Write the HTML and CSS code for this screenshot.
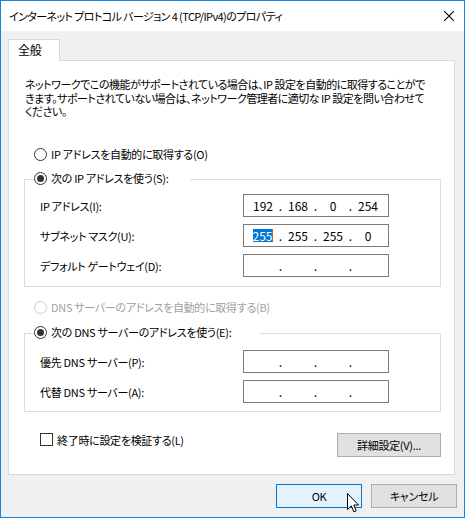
FILE: index.html
```html
<!DOCTYPE html>
<html lang="ja">
<head>
  <meta charset="UTF-8" />
  <title>インターネット プロトコル バージョン 4 (TCP/IPv4)のプロパティ</title>
  <link rel="stylesheet" href="styles.css">
</head>
<body>
  <div class="window">
    <div class="titlebar">
      <span class="title">インターネット プロトコル バージョン 4 (TCP/IPv4)のプロパティ</span>
      <svg class="close" width="10" height="10" viewBox="0 0 10 10">
        <path d="M0 0 L10 10 M10 0 L0 10" stroke="#000" stroke-width="1.1" fill="none"/>
      </svg>
    </div>

    <div class="dialog">
      <div class="tabs">
        <div class="tab">全般</div>
      </div>

      <div class="panel">
        <p class="intro">ネットワークでこの機能がサポートされている場合は、IP 設定を自動的に取得することがで<br>きます。サポートされていない場合は、ネットワーク管理者に適切な IP 設定を問い合わせて<br>ください。</p>

        <label class="radio radio-ip-auto"><span class="radio-dot"></span>IP アドレスを自動的に取得する(O)</label>

        <div class="group group-ip">
          <label class="radio checked group-head head-ip"><span class="radio-dot"></span>次の IP アドレスを使う(S):</label>
          <div class="fields">
            <div class="field">
              <span class="field-label">IP アドレス(I):</span>
              <div class="ipbox">
                <span class="seg">192</span><span class="dot">.</span><span class="seg">168</span><span class="dot">.</span><span class="seg">0</span><span class="dot">.</span><span class="seg">254</span>
              </div>
            </div>
            <div class="field">
              <span class="field-label">サブネット マスク(U):</span>
              <div class="ipbox">
                <span class="seg"><span class="sel">255</span><span class="caret"></span></span><span class="dot">.</span><span class="seg">255</span><span class="dot">.</span><span class="seg">255</span><span class="dot">.</span><span class="seg">0</span>
              </div>
            </div>
            <div class="field">
              <span class="field-label">デフォルト ゲートウェイ(D):</span>
              <div class="ipbox">
                <span class="seg"></span><span class="dot">.</span><span class="seg"></span><span class="dot">.</span><span class="seg"></span><span class="dot">.</span><span class="seg"></span>
              </div>
            </div>
          </div>
        </div>

        <label class="radio disabled radio-dns-auto"><span class="radio-dot"></span>DNS サーバーのアドレスを自動的に取得する(B)</label>

        <div class="group group-dns">
          <label class="radio checked group-head head-dns"><span class="radio-dot"></span>次の DNS サーバーのアドレスを使う(E):</label>
          <div class="fields">
            <div class="field">
              <span class="field-label">優先 DNS サーバー(P):</span>
              <div class="ipbox">
                <span class="seg"></span><span class="dot">.</span><span class="seg"></span><span class="dot">.</span><span class="seg"></span><span class="dot">.</span><span class="seg"></span>
              </div>
            </div>
            <div class="field">
              <span class="field-label">代替 DNS サーバー(A):</span>
              <div class="ipbox">
                <span class="seg"></span><span class="dot">.</span><span class="seg"></span><span class="dot">.</span><span class="seg"></span><span class="dot">.</span><span class="seg"></span>
              </div>
            </div>
          </div>
        </div>

        <div class="panel-footer">
          <label class="check"><span class="check-box"></span>終了時に設定を検証する(L)</label>
          <button class="btn btn-advanced">詳細設定(V)...</button>
        </div>
      </div>

      <div class="actions">
        <button class="btn btn-default">OK</button>
        <button class="btn">キャンセル</button>
      </div>
    </div>

    <!-- mouse pointer over the OK button -->
    <svg class="cursor" width="12" height="20" viewBox="0 0 12 20">
      <path d="M0.5 0.5 L0.5 16.5 L4.3 12.8 L6.8 18.8 L9.2 17.8 L6.8 12 L11.5 12 Z" fill="#fff" stroke="#000" stroke-width="1" stroke-linejoin="miter"/>
    </svg>
  </div>
</body>
</html>
```

FILE: styles.css
```css
* {
  box-sizing: border-box;
}
html, body {
  margin: 0;
  padding: 0;
}
body {
  font-family: "Noto Sans CJK JP", "Noto Sans", sans-serif;
  font-size: 11px;
  letter-spacing: -0.3px;
  color: #000;
  font-feature-settings: "palt";
  background: #fff;
}
.window {
  position: relative;
  width: 465px;
  height: 518px;
  border: 1px solid #1883d7;
  background: #f0f0f0;
  overflow: hidden;
}
.titlebar {
  height: 30px;
  background: #fff;
  display: flex;
  align-items: center;
  justify-content: space-between;
  padding: 0 10px 0 8px;
}
.title {
  white-space: nowrap;
  letter-spacing: -0.6px;
}
.dialog {
  padding: 8px 7px 0 7px;
}
.tabs {
  display: flex;
}
.tab {
  position: relative;
  z-index: 1;
  width: 52px;
  height: 22px;
  margin-bottom: -1px;
  padding-left: 9px;
  line-height: 20px;
  font-size: 12px;
  background: #fff;
  border: 1px solid #d9d9d9;
  border-bottom: none;
}
.panel {
  width: 447px;
  height: 415px;
  background: #fff;
  border: 1px solid #d9d9d9;
  padding: 17px 0 0 15px;
}
.intro {
  margin: 0 0 0 1px;
  height: 41px;
  line-height: 13.5px;
  letter-spacing: -0.5px;
  white-space: nowrap;
}

/* radio buttons */
.radio {
  display: flex;
  align-items: center;
  height: 16px;
  margin-left: 10px;
  white-space: nowrap;
}
.radio-dot {
  width: 13px;
  height: 13px;
  margin-right: 4px;
  border: 1px solid #333;
  border-radius: 50%;
  background: #fff;
  flex-shrink: 0;
}
.radio.checked .radio-dot::after {
  content: "";
  display: block;
  width: 7px;
  height: 7px;
  margin: 2px;
  border-radius: 50%;
  background: #333;
}
.radio.disabled {
  color: #a0a0a0;
}
.radio.disabled .radio-dot {
  border-color: #cccccc;
}
.radio-ip-auto {
  margin-top: 27px;
}
.radio-dns-auto {
  margin-top: 12px;
}

/* group boxes */
.group {
  width: 417px;
  border: 1px solid #dcdcdc;
  padding: 0 0 9px 15px;
}
.group-ip {
  margin-top: 17px;
}
.group-dns {
  margin-top: 18px;
  padding-bottom: 8px;
}
.group-head {
  margin: -10px 0 0 -6px;
  background: #fff;
}
.head-ip {
  width: 156px;
}
.head-dns {
  width: 226px;
}
.fields {
  display: flex;
  flex-direction: column;
  gap: 7px;
  padding-top: 8px;
}
.group-dns .fields {
  padding-top: 10px;
}
.field {
  display: flex;
  align-items: center;
  height: 23px;
}
.field-label {
  width: 203px;
  white-space: nowrap;
}
.ipbox {
  width: 146px;
  height: 23px;
  border: 1px solid #7a7a7a;
  background: #fff;
  display: flex;
  align-items: center;
  padding-left: 5px;
  font-size: 12px;
  letter-spacing: 0;
}
.seg {
  width: 28px;
  display: flex;
  justify-content: center;
  align-items: center;
}
.dot {
  width: 7px;
  text-align: center;
}
.sel {
  display: inline-block;
  line-height: 13px;
  background: #0078d7;
  color: #fff;
}
.caret {
  display: inline-block;
  width: 1px;
  height: 13px;
  background: #c0641c;
}

/* bottom of the panel */
.panel-footer {
  width: 417px;
  margin-top: 21px;
  display: flex;
  justify-content: space-between;
  align-items: flex-start;
}
.check {
  display: flex;
  align-items: center;
  height: 13px;
  margin-left: 16px;
  white-space: nowrap;
}
.check-box {
  width: 13px;
  height: 13px;
  margin-right: 4px;
  border: 1px solid #333;
  background: #fff;
}
.btn {
  height: 24px;
  padding: 0;
  font: inherit;
  letter-spacing: inherit;
  color: #000;
  background: #e1e1e1;
  border: 1px solid #adadad;
}
.btn-advanced {
  width: 104px;
}
.actions {
  display: flex;
  justify-content: flex-end;
  gap: 9px;
  margin-top: 9px;
}
.actions .btn {
  width: 86px;
}
.btn-default {
  background: #e5f1fb;
  border-color: #0078d7;
}
.cursor {
  position: absolute;
  left: 346px;
  top: 492px;
}
```
